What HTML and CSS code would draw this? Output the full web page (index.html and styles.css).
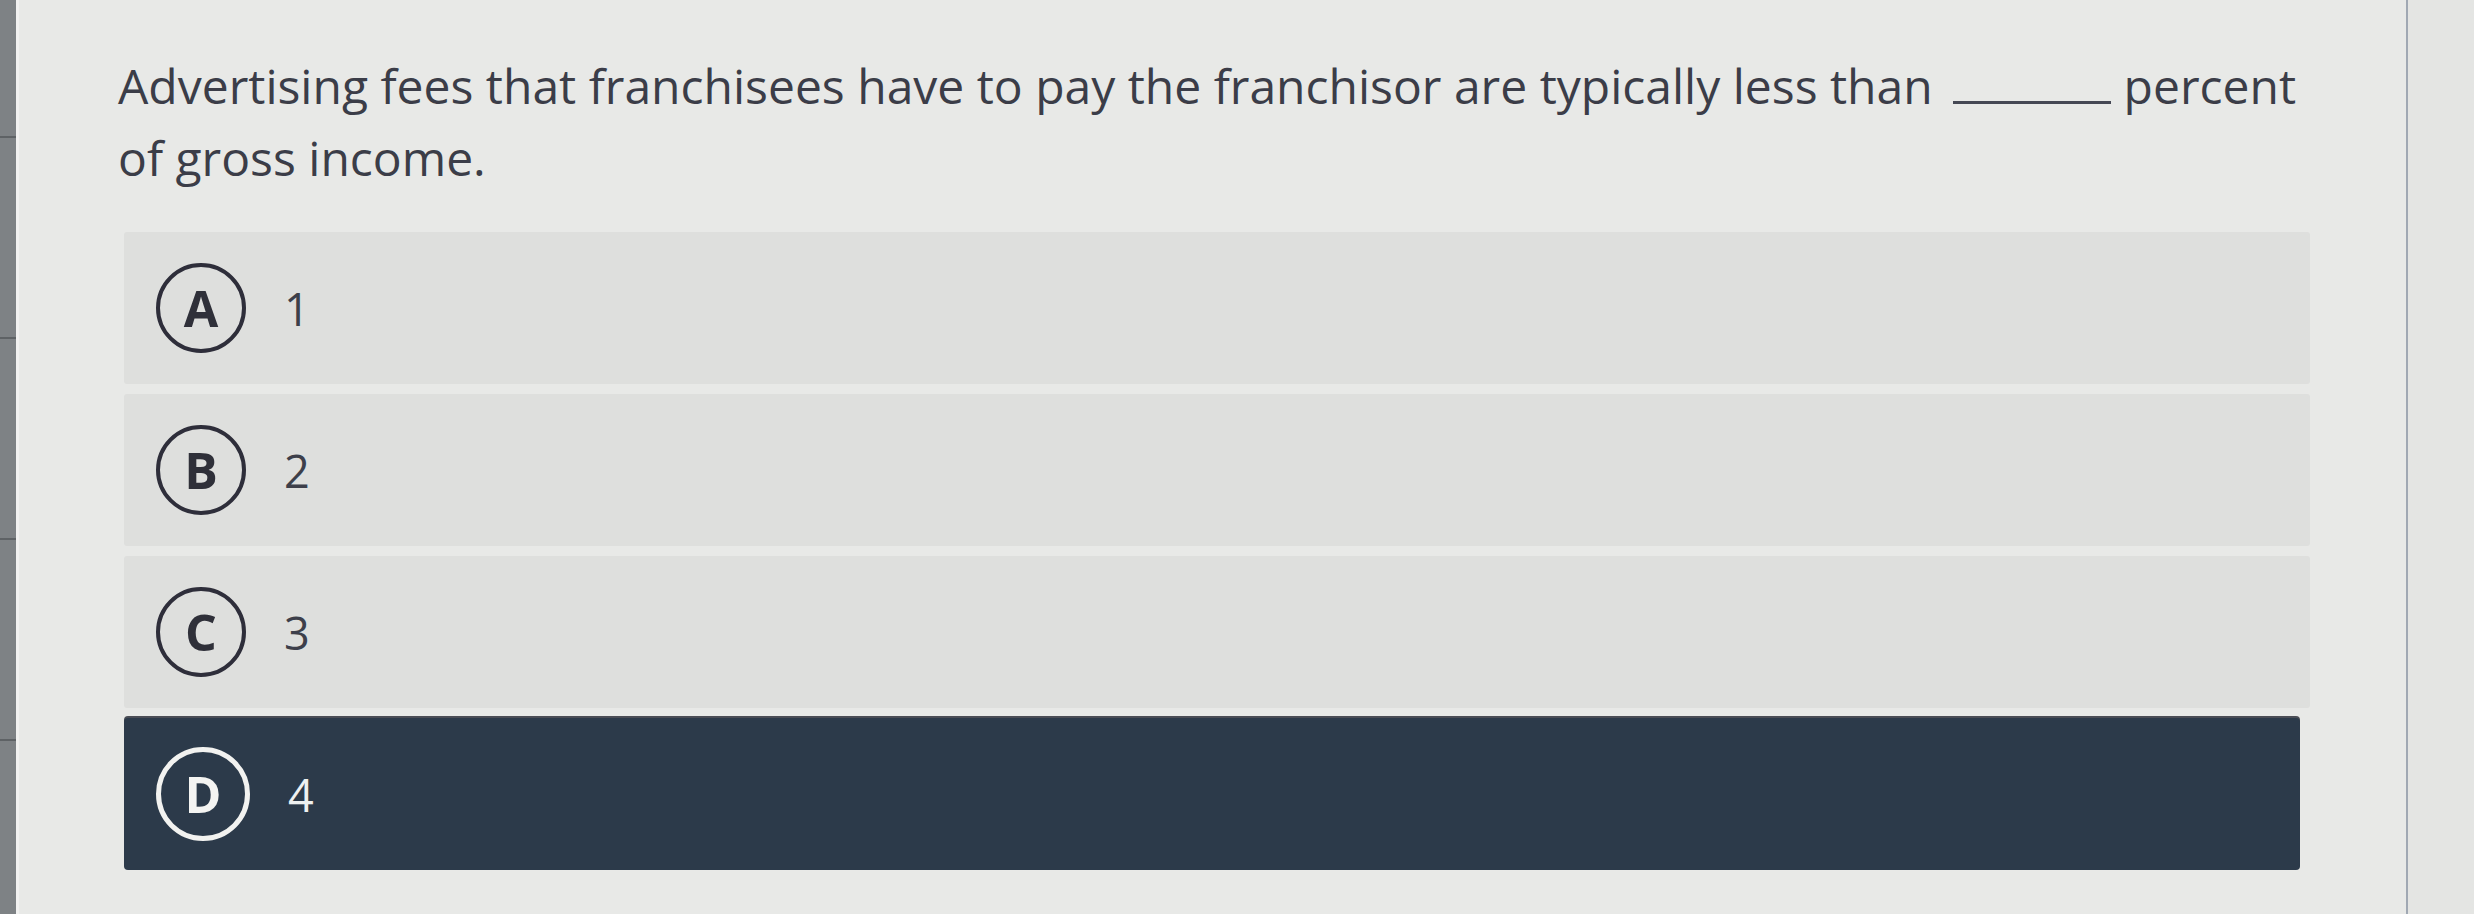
FILE: index.html
```html
<!DOCTYPE html>
<html lang="en">
<head>
<meta charset="utf-8">
<title>Question</title>
<link rel="stylesheet" href="styles.css">
</head>
<body>
<div class="screen">
  <aside class="rail"></aside>
  <main class="panel">
    <p class="question">Advertising fees that franchisees have to pay the franchisor are typically less than <span class="blank"></span> percent of gross income.</p>
    <ul class="choices">
      <li class="choice"><span class="badge">A</span><span class="value">1</span></li>
      <li class="choice"><span class="badge">B</span><span class="value">2</span></li>
      <li class="choice"><span class="badge">C</span><span class="value">3</span></li>
      <li class="choice selected"><span class="badge">D</span><span class="value">4</span></li>
    </ul>
  </main>
  <div class="gutter"></div>
</div>
</body>
</html>
```
FILE: styles.css
```css
html, body {
  margin: 0;
  padding: 0;
  background: #e7e8e6;
}

.screen {
  display: flex;
  width: 2474px;
  height: 914px;
  overflow: hidden;
  font-family: "Open Sans", "Noto Sans", sans-serif;
  color: #3b3d48;
}

/* dark sidebar edge on the left */
.rail {
  width: 16px;
  flex: none;
  background-color: #7e8285;
  background-image: repeating-linear-gradient(to bottom,
    transparent 0, transparent 136px, #5e6265 136px, #5e6265 138px, transparent 138px, transparent 201px);
  border-right: 3px solid #f1f1f0;
}

.panel {
  flex: none;
  width: 2389px;
  box-sizing: border-box;
  padding: 50px 78px 0 99px;
  border-right: 2px solid #a0a8b3;
  background: #e8e9e7;
}

.gutter {
  flex: 1;
  background: #e4e5e3;
}

.question {
  margin: 0;
  font-size: 48px;
  line-height: 72px;
  font-weight: 400;
}

.blank {
  display: inline-block;
  width: 158px;
  height: 4px;
  margin-left: 8px;
  margin-right: 0;
  border-bottom: 3px solid #454854;
  vertical-align: baseline;
}

.choices {
  list-style: none;
  margin: 38px 18px 0 6px;
  padding: 0;
  display: flex;
  flex-direction: column;
  gap: 10px;
}

.choice {
  height: 152px;
  box-sizing: border-box;
  display: flex;
  align-items: center;
  gap: 38px;
  padding-left: 32px;
  background: #dedfdd;
  border-radius: 3px;
}

.badge {
  width: 90px;
  height: 90px;
  box-sizing: border-box;
  border: 4px solid #2e2e3a;
  border-radius: 50%;
  display: flex;
  align-items: center;
  justify-content: center;
  font-size: 50px;
  font-weight: 700;
  line-height: 1;
  color: #2f3039;
}

.value {
  font-size: 45px;
  line-height: 1;
  color: #3d3f4a;
}

.choice.selected {
  margin-right: 10px;
  background: #2c3a4a;
  border-radius: 4px;
  box-shadow: 0 -2px 0 #4a4d55;
}

.choice.selected .badge {
  border-color: #f2f2f0;
  color: #f4f4f2;
  width: 94px;
  height: 94px;
  border-width: 5px;
}

.choice.selected .value {
  color: #eef0f0;
}
```
